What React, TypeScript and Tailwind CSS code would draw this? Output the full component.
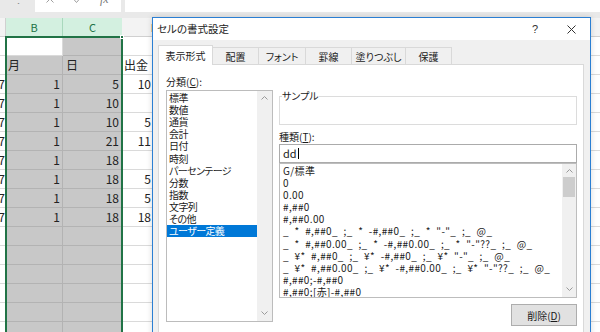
import React from "react";

const F = "font-['Noto_Sans_CJK_JP',sans-serif]";

type Row = { a: string; b: string; c: string; d: string; text?: boolean };
const rows: Row[] = [
  { a: "", b: "", c: "", d: "" },
  { a: "", b: "月", c: "日", d: "出金", text: true },
  { a: "7", b: "1", c: "5", d: "10" },
  { a: "7", b: "1", c: "10", d: "" },
  { a: "7", b: "1", c: "10", d: "5" },
  { a: "7", b: "1", c: "21", d: "11" },
  { a: "7", b: "1", c: "18", d: "" },
  { a: "7", b: "1", c: "18", d: "5" },
  { a: "7", b: "1", c: "18", d: "5" },
  { a: "7", b: "1", c: "18", d: "18" },
  { a: "", b: "", c: "", d: "" },
  { a: "", b: "", c: "", d: "" },
  { a: "", b: "", c: "", d: "" },
  { a: "", b: "", c: "", d: "" },
  { a: "", b: "", c: "", d: "" },
  { a: "", b: "", c: "", d: "" },
];

const cats = [
  "標準",
  "数値",
  "通貨",
  "会計",
  "日付",
  "時刻",
  "パーセンテージ",
  "分数",
  "指数",
  "文字列",
  "その他",
  "ユーザー定義",
];

const types = [
  "G/標準",
  "0",
  "0.00",
  "#,##0",
  "#,##0.00",
  '_ * #,##0_ ;_ * -#,##0_ ;_ * "-"_ ;_ @_',
  '_ * #,##0.00_ ;_ * -#,##0.00_ ;_ * "-"??_ ;_ @_',
  '_ ¥* #,##0_ ;_ ¥* -#,##0_ ;_ ¥* "-"_ ;_ @_',
  '_ ¥* #,##0.00_ ;_ ¥* -#,##0.00_ ;_ ¥* "-"??_ ;_ @_',
  "#,##0;-#,##0",
  "#,##0;[赤]-#,##0",
];

function Chev({ down }: { down?: boolean }) {
  return (
    <svg width="7" height="4" viewBox="0 0 7 4" className={down ? "rotate-180" : ""}>
      <polyline points="0.5,3.5 3.5,0.5 6.5,3.5" fill="none" stroke="#9a9a9a" strokeWidth="1" />
    </svg>
  );
}

function Sheet() {
  return (
    <div className={`flex flex-col ${F} text-[#222]`}>
      {/* formula bar (cut off at top) */}
      <div className="h-[12px] bg-[#e9e9e9] overflow-hidden">
        <div className="flex h-[26px] -mt-[14px]">
          <div className="w-[35px] flex items-center justify-end pr-[11px] text-[#888] text-[11px]">⋮</div>
          <div className="w-[86px] bg-white flex items-center text-[#9a9a9a]">
            <svg width="8" height="8" viewBox="0 0 8 8" className="ml-[11px]">
              <path d="M0.5 0.5 L7.5 7.5 M7.5 0.5 L0.5 7.5" stroke="#a0a0a0" strokeWidth="1" />
            </svg>
            <svg width="10" height="8" viewBox="0 0 10 8" className="ml-[19px]">
              <path d="M0.5 4 L3.5 7.5 L9.5 0.5" fill="none" stroke="#a0a0a0" strokeWidth="1" />
            </svg>
            <span className="ml-[17px] italic text-[12px] font-['Liberation_Serif',serif] text-[#7a7a7a]">fx</span>
          </div>
          <div className="ml-[4px] flex-1 bg-white" />
        </div>
      </div>
      <div className="h-[6px] bg-[#e9e9e9]" />
      {/* column headers */}
      <div className="flex h-[19px] text-[11px] bg-[#f3f3f3]">
        <div className="w-[6px] border-r border-b border-[#d0d0d0]" />
        <div className="w-[57px] bg-[#d3f0e0] text-[#217346] border-r border-[#a9d8bd] flex items-center justify-center">B</div>
        <div className="w-[59px] bg-[#d3f0e0] text-[#217346] flex items-center justify-center">C</div>
        <div className="w-[66px] border-r border-b border-[#d0d0d0] flex items-center justify-center text-[#444]">D</div>
        <div className="flex-1 border-b border-[#d0d0d0]" />
      </div>
      {/* rows */}
      <div className="relative">
        {rows.map((r, i) => (
          <div key={i} className="flex h-[19px] text-[12px]">
            <div className="w-[6px] border-r border-b border-[#dadada] overflow-hidden flex items-center justify-end">
              <span className="shrink-0">{r.a}</span>
            </div>
            <div
              className={`w-[57px] border-r border-b flex items-center pr-[2px] ${
                i === 0 ? "bg-white border-[#dadada]" : "bg-[#c8c8c8] border-[#b3b3b3]"
              } ${r.text ? "justify-start pl-[2px]" : "justify-end"}`}
            >
              {r.b}
            </div>
            <div
              className={`w-[59px] border-r border-b border-[#b3b3b3] bg-[#c8c8c8] flex items-center pr-[2px] ${
                r.text ? "justify-start pl-[3px]" : "justify-end"
              }`}
            >
              {r.c}
            </div>
            <div className="w-[66px] border-r border-b border-[#dadada] flex items-center">
              {r.text ? (
                <span className="pl-[2px]">{r.d}</span>
              ) : (
                <span className="w-[29px] text-right">{r.d}</span>
              )}
            </div>
            <div className="flex-1 border-b border-[#dadada]" />
          </div>
        ))}
        {/* selection outline */}
        <div className="absolute left-[5px] -top-[1px] w-[118px] h-[400px] border-2 border-[#217346]" />
        <div className="absolute left-[120px] -top-[2px] w-[4px] h-[4px] bg-[#217346] border border-white" />
      </div>
    </div>
  );
}

function Dialog() {
  const tabs = [
    { t: "配置", w: "w-[46px]" },
    { t: "フォント", w: "w-[47px]" },
    { t: "罫線", w: "w-[46px]" },
    { t: "塗りつぶし", w: "w-[54px]" },
    { t: "保護", w: "w-[46px]" },
  ];
  return (
    <div
      className={`absolute left-[152px] top-[17px] w-[439px] h-[330px] border border-[#2b7fd3] bg-[#f0f0f0] flex flex-col ${F} [font-feature-settings:'palt'] text-[10px] text-[#1b1b1b] shadow-[0_0_6px_rgba(0,0,0,0.15)]`}
    >
      {/* title bar */}
      <div className="h-[22px] bg-white flex items-center pl-[4px] pr-[14px] shrink-0">
        <span className="text-[10.5px] text-[#222]">セルの書式設定</span>
        <span className="ml-auto text-[11px] text-[#333] font-['Liberation_Sans',sans-serif]">?</span>
        <svg width="9" height="9" viewBox="0 0 9 9" className="ml-[29px]">
          <path d="M0.5 0.5 L8.5 8.5 M8.5 0.5 L0.5 8.5" stroke="#333" strokeWidth="1" />
        </svg>
      </div>
      {/* body */}
      <div className="flex-1 flex flex-col pl-[5px] pr-[6px] pt-[5px]">
        <div className="flex items-end h-[19px]">
          <div className="relative z-10 w-[55px] h-[20px] -mb-[1px] bg-white border-t border-l border-r border-[#d9d9d9] flex items-center justify-center pb-[1px]">
            表示形式
          </div>
          {tabs.map((t) => (
            <div
              key={t.t}
              className={`${t.w} h-[17px] border-t border-r border-[#d9d9d9] flex items-center justify-center`}
            >
              {t.t}
            </div>
          ))}
        </div>
        <div className="flex-1 bg-white border border-[#d9d9d9] flex pl-[7px] pt-[11px]">
          {/* left column */}
          <div className="w-[107px] flex flex-col">
            <div className="h-[12px] leading-[12px]">
              分類(<span className="underline">C</span>):
            </div>
            <div className="mt-[2px] h-[232px] border border-[#bcbcbc] flex">
              <div className="flex-1 pt-[1px] overflow-hidden">
                {cats.map((c, i) => (
                  <div
                    key={c}
                    className={`h-[12.12px] leading-[12.12px] pl-[2px] whitespace-nowrap tracking-[-0.6px] ${
                      i === cats.length - 1 ? "bg-[#0078d7] text-white" : ""
                    }`}
                  >
                    {c}
                  </div>
                ))}
              </div>
              <div className="w-[15px] bg-[#f0f0f0] flex flex-col items-center justify-between pt-[5px] pb-[6px]">
                <Chev />
                <Chev down />
              </div>
            </div>
          </div>
          {/* right column */}
          <div className="ml-[6px] w-[298px] flex flex-col">
            <fieldset className="mt-[15px] h-[34px] border border-[#dcdcdc]">
              <legend className="ml-[2px] leading-[10px] text-[10px]">サンプル</legend>
            </fieldset>
            <div className="mt-[6px] h-[12px] leading-[12px]">
              種類(<span className="underline">T</span>):
            </div>
            <div className="mt-[1px] h-[19px] border border-[#ababab] flex items-center pl-[3px] text-[11px]">
              <span>dd</span>
              <span className="ml-[1px] w-[1px] h-[11px] bg-black" />
            </div>
            <div className="h-[135px] border border-[#bdbdbd] flex">
              <div className="flex-1 pl-[3px] pt-[1px] overflow-hidden tracking-[0.36px] [word-spacing:3px]">
                {types.map((t) => (
                  <div key={t} className="h-[12.1px] leading-[12.1px] whitespace-pre">
                    {t}
                  </div>
                ))}
              </div>
              <div className="w-[14px] bg-[#f0f0f0] flex flex-col items-center pt-[5px] pb-[6px]">
                <Chev />
                <div className="mt-[4px] w-[12px] h-[20px] bg-[#cdcdcd]" />
                <div className="flex-1" />
                <Chev down />
              </div>
            </div>
            <button className="mt-[6px] self-end w-[66px] h-[22px] bg-[#e1e1e1] border border-[#adadad] flex items-center justify-center text-[10px]">
              削除(<span className="underline">D</span>)
            </button>
          </div>
        </div>
      </div>
    </div>
  );
}

export default function App() {
  return (
    <div className="relative w-[600px] h-[332px] overflow-hidden bg-white">
      <Sheet />
      <Dialog />
    </div>
  );
}
